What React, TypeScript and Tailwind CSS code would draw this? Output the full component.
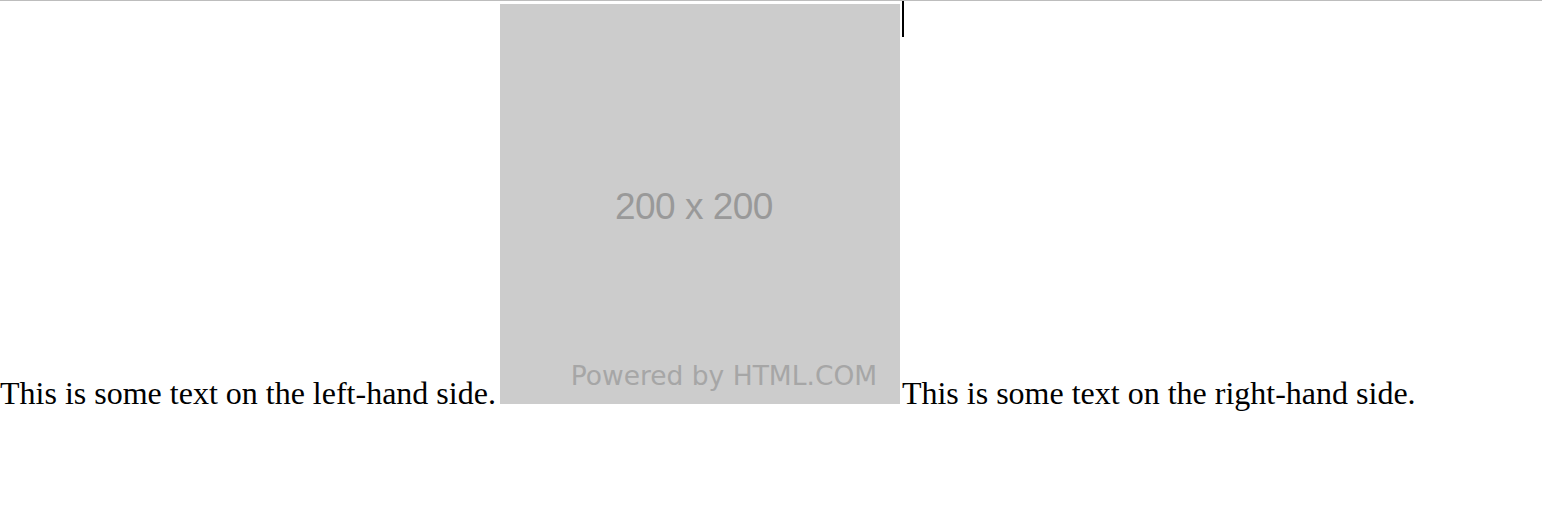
export default function App() {
  return (
    <div className="relative min-h-[522px] bg-white border-t border-[#bdbdbd]">
      {/* caret-like mark above the right-hand text */}
      <div className="absolute left-[902px] top-0 w-[2px] h-[36px] bg-black" />

      <div className="pt-[3px] text-[32px] leading-normal text-black whitespace-nowrap font-['Liberation_Serif','Times_New_Roman',serif]">
        This is some text on the left-hand side.
        <div className="inline-block ml-[4px] w-[400px] h-[400px] overflow-hidden bg-[#cccccc] align-baseline">
          <div className="flex flex-col items-center h-full">
            <div className="mt-[184px] -translate-x-[6px] text-[37px] leading-none text-[#999999] font-['Liberation_Sans',Arial,sans-serif] tracking-[-0.5px]">
              200 x 200
            </div>
            <div className="mt-[138px] translate-x-[24px] text-[26.5px] leading-none text-[#a6a6a6] font-['DejaVu_Sans',Verdana,sans-serif]">
              Powered by HTML.COM
            </div>
          </div>
        </div>
        <span className="ml-[2px]">This is some text on the right-hand side.</span>
      </div>
    </div>
  )
}
